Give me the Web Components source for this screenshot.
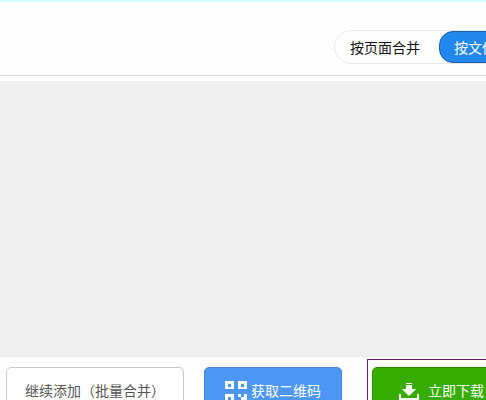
<!DOCTYPE html>
<html lang="zh-CN">
<head>
<meta charset="utf-8">
<title>合并</title>
<style>
  body {
    margin: 0;
    background: #fefefe;
    font: 14px/18px "Noto Sans CJK SC", sans-serif;
    color: #111;
  }
</style>
</head>
<body>
<merge-page>
  <mode-switch slot="top">
    <mode-option name="page">按页面合并</mode-option>
    <mode-option name="file" active>按文件合并</mode-option>
  </mode-switch>
  <action-button slot="actions" kind="plain">继续添加（批量合并）</action-button>
  <action-button slot="actions" kind="code">获取二维码</action-button>
  <focus-frame slot="actions">
    <action-button kind="download">立即下载</action-button>
  </focus-frame>
</merge-page>

<script>
const makeShadow = (element, html) => {
    const template = document.createElement("template");
    template.innerHTML = html;
    element.attachShadow({ mode: "open" }).appendChild(template.content.cloneNode(true));
};

class MergePage extends HTMLElement {
    constructor() {
        super();
        makeShadow(this, /*html*/`
  <style>
  :host{
    display: flex; flex-direction: column; height: 100vh; box-sizing: border-box;
    overflow: hidden; border-top: 2px solid #d4fbff;
  }
  header{
    display: flex; justify-content: flex-end; min-width: 560px; box-sizing: border-box;
    padding: 28px 20px 11px; border-bottom: 1px solid #dcdce0;
  }
  main{flex: 1; margin-top: 5px; background: #efefef;}
  footer{display: flex; align-items: flex-start; height: 33px; padding: 10px 6px 0; gap: 20px;}
  </style>
  <header><slot name="top"></slot></header>
  <main></main>
  <footer><slot name="actions"></slot></footer>`);
    }
}

class ModeSwitch extends HTMLElement {
    constructor() {
        super();
        makeShadow(this, /*html*/`
  <style>
  :host{display: flex; border: 1px solid #e8e8ec; border-radius: 18px;}
  </style>
  <slot></slot>`);
    }
}

class ModeOption extends HTMLElement {
    constructor() {
        super();
        makeShadow(this, /*html*/`
  <style>
  :host{display: block;}
  button{
    display: block; height: 32px; padding: 0 15px; font: inherit; color: #111;
    background: none; border: 0; border-radius: 14px; white-space: nowrap;
  }
  :host([active]) button{color: #fff; background: #2388ee; border: 1px solid #1a5fa8; padding: 0 14px;}
  :host(:not([active])) button{padding-right: 19px;}
  </style>
  <button type="button"><slot></slot></button>`);
        this.shadowRoot.querySelector("button").onclick = () => {
            this.parentElement.querySelectorAll("mode-option").forEach((option) => option.removeAttribute("active"));
            this.setAttribute("active", "");
        };
    }
}

// icons shown in front of the label, by kind of button
const icons = {
    code: `<svg width="22" height="26" viewBox="0 -4 22 26" fill="#fff">
      <path fill-rule="evenodd" d="M0 0h9v8H0zM3 3v3h3V3zM13 0h9v8h-9zM16 3v3h3V3zM0 13h9v9H0zM3 16v3h3v-3z"/>
      <path d="M13 13h3v3h-3zM19 13h3v6h-3zM16 16h3v3h-3zM13 19h3v3h-3z"/>
    </svg>`,
    download: `<svg width="20" height="20" viewBox="0 0 20 20" fill="#fff">
      <path d="M7 3h6v1H7zM7 5h6v4h4l-7 7-7-7h4zM0 14h2v4h16v-4h2v6H0z"/>
    </svg>`
};

class ActionButton extends HTMLElement {
    constructor() {
        super();
        makeShadow(this, /*html*/`
  <style>
  :host{display: block; flex: none;}
  button{
    display: flex; align-items: center; height: 46px; padding: 0 18px;
    font: inherit; color: #555; background: #fff;
    border: 1px solid #c8c8c8; border-radius: 5px; white-space: nowrap;
  }
  :host([kind="code"]) button{gap: 4px; padding: 0 20px; color: #fff; background: #4c97f5; border-color: #3f83da;}
  :host([kind="download"]) button{gap: 9px; padding: 0 26px; color: #fff; background: #36ad00; border-color: #2a8a08;}
  </style>
  <button type="button">${icons[this.getAttribute("kind")] || ""}<span><slot></slot></span></button>`);
    }
}

class FocusFrame extends HTMLElement {
    constructor() {
        super();
        makeShadow(this, /*html*/`
  <style>
  :host{display: block; flex: none; margin: -8px 0 0 5px; padding: 7px 4px; border: 1px solid #6a1a70;}
  </style>
  <slot></slot>`);
    }
}

customElements.define("merge-page", MergePage);
customElements.define("mode-switch", ModeSwitch);
customElements.define("mode-option", ModeOption);
customElements.define("action-button", ActionButton);
customElements.define("focus-frame", FocusFrame);
</script>
</body>
</html>
